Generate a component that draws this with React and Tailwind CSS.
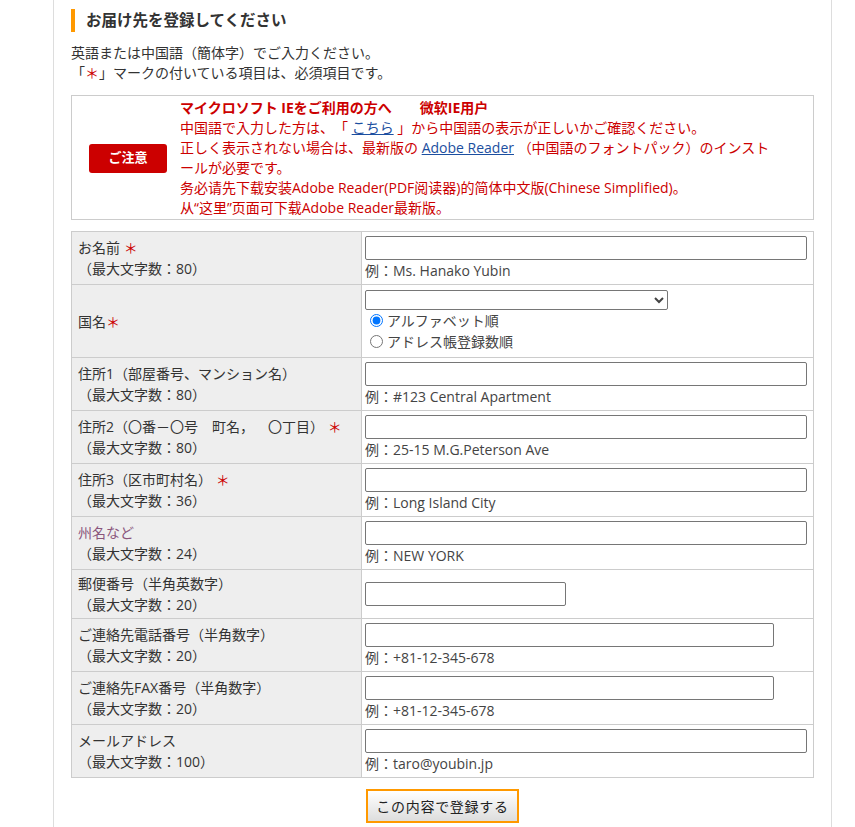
import React from "react";

const FONT = { fontFamily: '"Open Sans", "Noto Sans CJK JP", sans-serif' };

function Req() {
  return <span className="text-[#cc0000]">＊</span>;
}

function Row({ h, label, children, labelClass = "text-[#333]" }) {
  return (
    <div className={`flex border-b border-[#ccc] ${h}`}>
      <div className={`w-[290px] shrink-0 bg-[#eeeeee] border-r border-[#ccc] flex flex-col justify-center pl-[6px] leading-[21px] ${labelClass}`}>
        {label}
      </div>
      <div className="flex-1 flex flex-col justify-center pl-[3px] leading-[21px] text-[#444]">
        {children}
      </div>
    </div>
  );
}

function TextInput({ w }) {
  return (
    <input
      type="text"
      className={`${w} h-[24px] border border-[#767676] rounded-[2px] bg-white block`}
    />
  );
}

export default function App() {
  return (
    <div className="bg-white min-h-[827px] text-[14px] text-[#333] [text-spacing-trim:space-all]" style={FONT}>
      <div className="ml-[53px] w-[779px] min-h-[827px] border-l border-r border-[#dddddd] pl-[17px] pr-[17px] pt-[9px]">
        <h2 className="border-l-[4px] border-[#ff9900] pl-[11px] h-[23px] flex items-center text-[15.5px] font-bold text-[#333] leading-[23px]">
          お届け先を登録してください
        </h2>
        <div className="mt-[11px] leading-[20px] text-[#333]">
          <p>英語または中国語（簡体字）でご入力ください。</p>
          <p>
            「<span className="text-[#cc0000]">＊</span>」マークの付いている項目は、必須項目です。
          </p>
        </div>

        <div className="mt-[12px] border border-[#ccc] flex items-center pt-[2px] pb-[1px]">
          <div className="ml-[17px] w-[78px] h-[29px] shrink-0 rounded-[3px] bg-[#cc0000] text-white font-bold text-[13px] flex items-center justify-center">
            ご注意
          </div>
          <div className="ml-[13px] pr-[35px] leading-[20px] text-[#cc0000]">
            <p className="font-bold">
              マイクロソフト IEをご利用の方へ　　微软IE用户
            </p>
            <p>
              中国語で入力した方は、「{" "}
              <span className="underline text-[#1c4fa0]">こちら</span>
              {" "}」から中国語の表示が正しいかご確認ください。
            </p>
            <p>
              正しく表示されない場合は、最新版の{" "}
              <span className="underline text-[#1c4fa0]">Adobe Reader</span>
              {" "}（中国語のフォントパック）のインストールが必要です。
            </p>
            <p>务必请先下载安装Adobe Reader(PDF阅读器)的简体中文版(Chinese Simplified)。</p>
            <p>从“这里”页面可下载Adobe Reader最新版。</p>
          </div>
        </div>

        <div className="mt-[11px] border-l border-r border-t border-[#ccc]">
          <Row
            h="h-[53px]"
            label={
              <>
                <span>お名前 <Req /></span>
                <span>（最大文字数：80）</span>
              </>
            }
          >
            <TextInput w="w-[442px]" />
            <span>例：Ms. Hanako Yubin</span>
          </Row>
          <Row
            h="h-[73px]"
            label={
              <span>
                国名<Req />
              </span>
            }
          >
            <select className="w-[303px] h-[20px] border border-[#767676] rounded-[2px] bg-white text-[13px] block">
              <option></option>
            </select>
            <label className="flex items-center">
              <input type="radio" name="sort" defaultChecked className="ml-[5px] mr-[4px] w-[13px] h-[13px]" />
              <span>アルファベット順</span>
            </label>
            <label className="flex items-center">
              <input type="radio" name="sort" className="ml-[5px] mr-[4px] w-[13px] h-[13px]" />
              <span>アドレス帳登録数順</span>
            </label>
          </Row>
          <Row
            h="h-[53px]"
            label={
              <>
                <span>住所1（部屋番号、マンション名）</span>
                <span>（最大文字数：80）</span>
              </>
            }
          >
            <TextInput w="w-[442px]" />
            <span>例：#123 Central Apartment</span>
          </Row>
          <Row
            h="h-[53px]"
            label={
              <>
                <span>
                  住所2（〇番－〇号　町名，　〇丁目） <Req />
                </span>
                <span>（最大文字数：80）</span>
              </>
            }
          >
            <TextInput w="w-[442px]" />
            <span>例：25-15 M.G.Peterson Ave</span>
          </Row>
          <Row
            h="h-[53px]"
            label={
              <>
                <span>
                  住所3（区市町村名） <Req />
                </span>
                <span>（最大文字数：36）</span>
              </>
            }
          >
            <TextInput w="w-[442px]" />
            <span>例：Long Island City</span>
          </Row>
          <Row
            h="h-[53px]"
            label={
              <>
                <span className="text-[#8a557c]">州名など</span>
                <span>（最大文字数：24）</span>
              </>
            }
          >
            <TextInput w="w-[442px]" />
            <span>例：NEW YORK</span>
          </Row>
          <Row
            h="h-[49px]"
            label={
              <>
                <span>郵便番号（半角英数字）</span>
                <span>（最大文字数：20）</span>
              </>
            }
          >
            <TextInput w="w-[201px]" />
          </Row>
          <Row
            h="h-[53px]"
            label={
              <>
                <span>ご連絡先電話番号（半角数字）</span>
                <span>（最大文字数：20）</span>
              </>
            }
          >
            <TextInput w="w-[409px]" />
            <span>例：+81-12-345-678</span>
          </Row>
          <Row
            h="h-[53px]"
            label={
              <>
                <span>ご連絡先FAX番号（半角数字）</span>
                <span>（最大文字数：20）</span>
              </>
            }
          >
            <TextInput w="w-[409px]" />
            <span>例：+81-12-345-678</span>
          </Row>
          <Row
            h="h-[53px]"
            label={
              <>
                <span>メールアドレス</span>
                <span>（最大文字数：100）</span>
              </>
            }
          >
            <TextInput w="w-[442px]" />
            <span>例：taro@youbin.jp</span>
          </Row>
        </div>

        <div className="mt-[11px] flex justify-center">
          <button
            type="button"
            className="w-[153px] h-[34px] border-2 border-[#ff9900] bg-gradient-to-b from-white to-[#dddddd] text-[14px] tracking-[0.05em] text-[#222] flex items-center justify-center"
          >
            この内容で登録する
          </button>
        </div>
      </div>
    </div>
  );
}
